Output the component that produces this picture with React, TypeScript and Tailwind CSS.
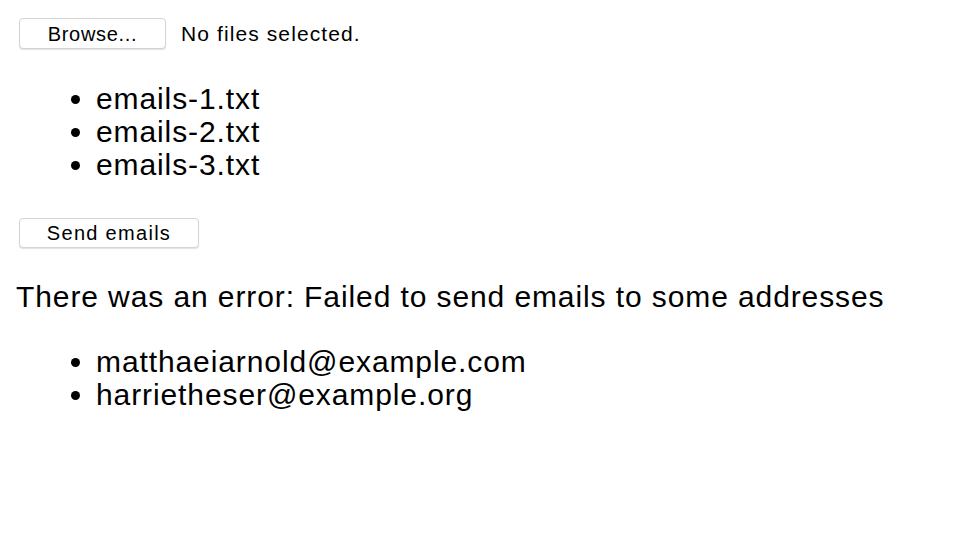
export default function App() {
  const files = ['emails-1.txt', 'emails-2.txt', 'emails-3.txt'];
  const failed = ['matthaeiarnold@example.com', 'harrietheser@example.org'];

  return (
    <div className="min-h-screen bg-white text-black px-4 pt-[18px]" style={{ fontFamily: '"Liberation Sans", Arial, sans-serif' }}>
      <div className="flex items-center">
        <button className="ml-[3px] w-[147px] h-[31px] rounded-[4px] border border-[#d4d4d4] bg-white shadow-[0_1px_1px_rgba(0,0,0,0.12)] text-[20px] tracking-[0.7px] leading-none">
          Browse...
        </button>
        <span className="ml-[15px] text-[21px] tracking-[1.1px] leading-none">No files selected.</span>
      </div>

      <ul className="list-disc pl-[80px] mt-[33px] text-[30px] tracking-[0.9px] leading-[33px]">
        {files.map((f) => (
          <li key={f}>{f}</li>
        ))}
      </ul>

      <button className="ml-[3px] mt-[37px] w-[180px] h-[30px] rounded-[4px] border border-[#d4d4d4] bg-white shadow-[0_1px_1px_rgba(0,0,0,0.12)] text-[20px] tracking-[1.3px] leading-none">
        Send emails
      </button>

      <p className="mt-[32px] text-[30px] tracking-[0.9px] leading-[33px]">There was an error: Failed to send emails to some addresses</p>

      <ul className="list-disc pl-[80px] mt-[32px] text-[30px] tracking-[0.9px] leading-[33px]">
        {failed.map((e) => (
          <li key={e}>{e}</li>
        ))}
      </ul>
    </div>
  );
}
